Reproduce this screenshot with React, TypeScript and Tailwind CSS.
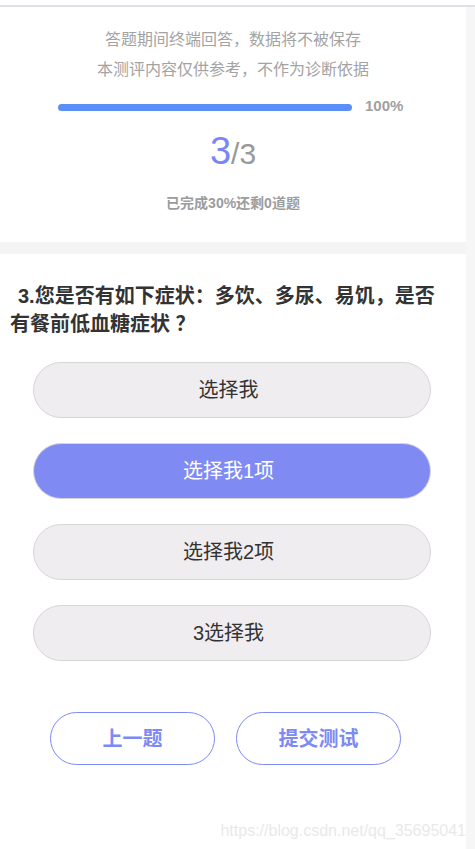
import React from 'react';

const options = ['选择我', '选择我1项', '选择我2项', '3选择我'];

export default function App() {
  const selected = 1;

  return (
    <div
      className="w-[475px] h-[849px] bg-white flex flex-col relative overflow-hidden"
      style={{ fontFamily: '"Liberation Sans", "Noto Sans CJK SC", sans-serif' }}
    >
      {/* top edge */}
      <div className="h-[5px] bg-white" />
      <div className="h-[2px] bg-[#e0dfe6]" />

      <div className="flex flex-1">
        <main className="w-[466px] flex flex-col">
          {/* progress card */}
          <section className="flex flex-col pt-[18px] pb-[29px]">
            <p className="text-center text-[16px] leading-[30px] text-[#a3a3a3]">答题期间终端回答，数据将不被保存</p>
            <p className="text-center text-[16px] leading-[30px] text-[#a3a3a3]">本测评内容仅供参考，不作为诊断依据</p>

            <div className="mt-[11px] h-[20px] flex items-center pl-[58px] gap-[13px]">
              <div className="w-[294px] h-[7px] rounded-full bg-[#5b8ef8] mt-[3px]" />
              <span className="text-[15px] font-bold text-[#a0a0a0]">100%</span>
            </div>

            <div className="mt-[15px] text-center text-[38px] leading-[40px] h-[40px]">
              <span className="text-[#7b86f6]">3</span>
              <span className="text-[30px] leading-none text-[#999999]">/3</span>
            </div>

            <p className="mt-[22px] text-center text-[14px] leading-[20px] font-bold text-[#9c9c9c]">
              已完成30%还剩0道题
            </p>
          </section>

          <div className="h-[12px] bg-[#f4f4f4]" />

          {/* question */}
          <section className="flex flex-col pt-[28px]">
            <h2 className="pl-[10px] pr-[20px] indent-[8px] text-[20px] leading-[28px] font-bold text-[#333333]">
              3.您是否有如下症状：多饮、多尿、易饥，是否有餐前低血糖症状 ？
            </h2>

            <div className="mt-[24px] ml-[33px] w-[398px] flex flex-col gap-[25px]">
              {options.map((o, i) => (
                <button
                  key={o}
                  className={`h-[56px] pr-[7px] rounded-full border border-[#d6d6d6] text-[20px] ${
                    i === selected ? 'bg-[#7f8bf3] text-white' : 'bg-[#efedf0] text-[#333333]'
                  }`}
                >
                  {o}
                </button>
              ))}
            </div>

            <div className="mt-[51px] ml-[50px] flex gap-[21px]">
              <button className="w-[165px] h-[53px] rounded-full border border-[#7d8af5] text-[20px] font-bold text-[#7d89f4]">
                上一题
              </button>
              <button className="w-[165px] h-[53px] rounded-full border border-[#7d8af5] text-[20px] font-bold text-[#7d89f4]">
                提交测试
              </button>
            </div>
          </section>
        </main>

        {/* scrollbar strip */}
        <div className="w-[9px] bg-[#f6f6f6]" />
      </div>

      {/* watermark */}
      <span className="absolute right-[9px] bottom-[8px] text-[16px] leading-[20px] text-[#e9e9e9]">
        https://blog.csdn.net/qq_35695041
      </span>
    </div>
  );
}
